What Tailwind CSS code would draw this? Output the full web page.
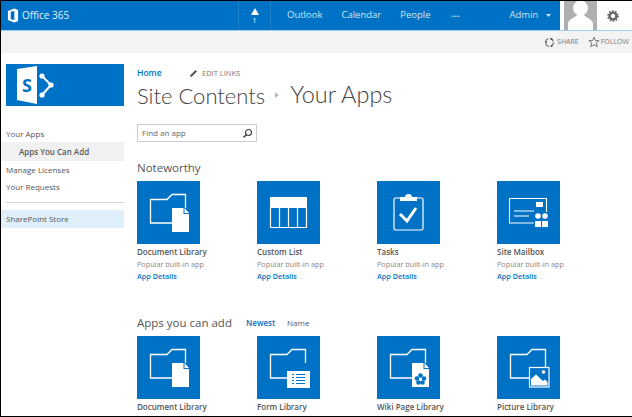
<!DOCTYPE html>
<html lang="en">
<head>
    <meta charset="UTF-8">
    <title>Your Apps</title>
    <script src="https://cdn.jsdelivr.net/npm/@tailwindcss/browser@4"></script>
</head>
<body class="bg-white">
    <svg width="0" height="0" class="absolute">
        <symbol id="folder" viewBox="0 0 63 63"><path d="M35 42H13.5V18.5H30L35 13.5H48.5V27" fill="none" stroke="#fff" stroke-width="1.3"/></symbol>
        <symbol id="doc" viewBox="0 0 63 63"><path d="M35 27H46.5V33H52V51H35Z" fill="#fff"/><path d="M47.5 27L52 32H47.5Z" fill="#fff"/></symbol>
    </svg>
    <div class="w-[632px] h-[417px] overflow-hidden border-t border-b border-l border-black font-['Open_Sans',sans-serif] flex flex-col">
        <!-- suite bar -->
        <div class="h-[29px] shrink-0 bg-[#0072c6] text-white flex items-center text-[9.5px]">
            <div class="w-[237px] flex items-center pl-[6px] gap-[3px]">
                <svg width="12" height="15" viewBox="0 0 13 16"><path d="M1 3L8 .5L12 2V14L8 15.5L1 13ZM8 3L4 4V12L8 13Z" fill="#fff"/></svg>
                <span class="text-[10px] text-[#e4f1fa]">Office 365</span>
            </div>
            <div class="w-[33px] h-full border-x border-[#1a82cf] flex flex-col items-center justify-center leading-none">
                <svg width="8" height="7" viewBox="0 0 8 7"><path d="M4 0L8 7H0Z" fill="#fff"/></svg>
                <span class="text-[7px] mt-[2px]">1</span>
            </div>
            <div class="flex items-center ml-[16px] gap-[19px] text-[#cfe6f6]">
                <span>Outlook</span>
                <span>Calendar</span>
                <span>People</span>
                <span class="font-bold ml-[2px] -mt-[2px] w-[10px]">...</span>
            </div>
            <div class="ml-[48px] flex items-center gap-[8px] text-[#cfe6f6]">
                <span>Admin</span>
                <svg width="5" height="3" viewBox="0 0 5 3"><path d="M0 0H5L2.5 3Z" fill="#cfe6f6"/></svg>
            </div>
            <div class="ml-[9px] flex-1 h-full bg-white flex items-center">
                <div class="ml-[4px] h-full w-[33px] bg-[#b0b0b0] flex items-end justify-center overflow-hidden">
                    <svg width="29" height="29" viewBox="0 0 29 29"><circle cx="14.5" cy="7" r="7.5" fill="#fff"/><path d="M2 29V23C2 18 9 17 11 14H18C20 17 27 18 27 23V29Z" fill="#fff"/></svg>
                </div>
                <svg class="ml-[10px]" width="12" height="12" viewBox="0 0 12 12"><circle cx="6" cy="6" r="3.4" fill="none" stroke="#666" stroke-width="2.4"/><circle cx="6" cy="6" r="5" fill="none" stroke="#666" stroke-width="1.6" stroke-dasharray="1.7 1.44"/></svg>
            </div>
        </div>
        <!-- ribbon row -->
        <div class="h-[23px] shrink-0 bg-[#f3f3f3] border-t border-[#9fd0ee] flex items-center justify-end gap-[9px] pr-[3px] text-[7px] text-[#777]">
            <div class="flex items-center gap-[2px]">
                <svg width="11" height="11" viewBox="0 0 11 11"><circle cx="5.5" cy="5.5" r="4" fill="none" stroke="#555" stroke-width="1.1" stroke-dasharray="4.5 1.8"/><circle cx="2" cy="5.5" r="1" fill="#555"/><circle cx="7.5" cy="2" r="1" fill="#555"/><circle cx="7.5" cy="9" r="1" fill="#555"/></svg>
                <span>SHARE</span>
            </div>
            <div class="flex items-center gap-[1px]">
                <svg width="12" height="12" viewBox="0 0 11 11"><path d="M5.5 1L6.8 4.2H10.2L7.5 6.4L8.5 9.9L5.5 7.9L2.5 9.9L3.5 6.4L.8 4.2H4.2Z" fill="none" stroke="#666" stroke-width=".8"/></svg>
                <span>FOLLOW</span>
            </div>
        </div>
        <div class="flex flex-1 min-h-0">
            <!-- left nav -->
            <div class="w-[123px] shrink-0 pt-[11px] text-[8px] text-[#555]">
                <div class="ml-[5px] h-[42px] bg-[#0072c6] flex items-center">
                    <svg width="50" height="42" viewBox="0 0 50 42">
                        <path d="M11 5L31 2V40L11 36Z" fill="#fff"/>
                        <path d="M36 12L45 21L36 31" fill="none" stroke="#fff" stroke-width="2"/>
                        <circle cx="36" cy="12" r="2.6" fill="#fff"/><circle cx="45" cy="21" r="2.6" fill="#fff"/><circle cx="36" cy="31" r="2.6" fill="#fff"/>
                        <text x="16" y="28" font-size="18" font-weight="700" fill="#0072c6" font-family="Open Sans">S</text>
                    </svg>
                </div>
                <div class="mt-[19px] h-[17px] pl-[5px] flex items-center">Your Apps</div>
                <div class="h-[19px] pl-[18px] flex items-center bg-[#f1f1f1] font-semibold">Apps You Can Add</div>
                <div class="h-[17px] pl-[5px] flex items-center">Manage Licenses</div>
                <div class="h-[18px] pl-[5px] flex items-center">Your Requests</div>
                <div class="ml-[5px] mt-[6px] border-t border-[#d5d5d5]"></div>
                <div class="mt-[7px] h-[18px] pl-[5px] flex items-center bg-[#e0f0fa]">SharePoint Store</div>
            </div>
            <!-- main column -->
            <div class="flex-1 pl-[13px] pt-[14px]">
                <div class="flex items-center h-[13px] text-[8.5px]">
                    <span class="w-[52px] font-semibold text-[#0072c6]">Home</span>
                    <svg width="9" height="9" viewBox="0 0 9 9"><path d="M1 8L1.5 6L6.5 1L8 2.5L3 7.5Z" fill="#555"/></svg>
                    <span class="ml-[4px] text-[7.5px] text-[#777]">EDIT LINKS</span>
                </div>
                <div class="flex items-center h-[30px] text-[#444] font-light font-['Lato',sans-serif]">
                    <span class="text-[22px]">Site Contents</span>
                    <svg class="ml-[10px] mr-[11px]" width="4" height="6" viewBox="0 0 4 6"><path d="M0 0L4 3L0 6Z" fill="#bbb"/></svg>
                    <span class="text-[23.5px]">Your Apps</span>
                </div>
                <div class="mt-[14px] w-[120px] h-[18px] border border-[#ccc] flex items-center justify-between pl-[4px] pr-[3px] text-[8px] text-[#666]">
                    <span>Find an app</span>
                    <svg width="11" height="11" viewBox="0 0 11 11"><circle cx="6.5" cy="4.5" r="3" fill="none" stroke="#444" stroke-width="1.2"/><path d="M4.5 6.5L1.5 9.5" stroke="#444" stroke-width="1.6"/></svg>
                </div>
                <h2 class="mt-[17px] h-[18px] text-[11.5px] leading-[18px] text-[#555]">Noteworthy</h2>
                <div class="mt-[4px] grid grid-cols-[120px_120px_120px_120px]">
                    <div>
                        <div class="w-[63px] h-[63px] bg-[#0072c6]"><svg width="63" height="63"><use href="#folder"/><use href="#doc"/></svg></div>
                        <p class="mt-[1px] h-[13px] leading-[13px] text-[8px] font-semibold text-[#555]">Document Library</p>
                        <p class="h-[12px] leading-[12px] text-[7.25px] text-[#888]">Popular built-in app</p>
                        <p class="h-[13px] leading-[13px] text-[7.25px] font-semibold text-[#0072c6]">App Details</p>
                    </div>
                    <div>
                        <div class="w-[63px] h-[63px] bg-[#0072c6]">
                            <svg width="63" height="63" viewBox="0 0 63 63"><rect x="13" y="16" width="37" height="11" fill="#fff"/><path d="M13.5 27V46.5H49.5V27M22.5 27V46.5M31.5 27V46.5M40.5 27V46.5" fill="none" stroke="#fff" stroke-width="1.2"/></svg>
                        </div>
                        <p class="mt-[1px] h-[13px] leading-[13px] text-[8px] font-semibold text-[#555]">Custom List</p>
                        <p class="h-[12px] leading-[12px] text-[7.25px] text-[#888]">Popular built-in app</p>
                        <p class="h-[13px] leading-[13px] text-[7.25px] font-semibold text-[#0072c6]">App Details</p>
                    </div>
                    <div>
                        <div class="w-[63px] h-[63px] bg-[#0072c6]">
                            <svg width="63" height="63" viewBox="0 0 63 63"><rect x="17" y="17" width="29" height="32" rx="1.5" fill="none" stroke="#fff" stroke-width="1.2"/><path d="M23 20V16H28C28 12 35 12 35 16H40V20Z" fill="#fff"/><path d="M23 33L30 40L39 27" fill="none" stroke="#fff" stroke-width="3"/></svg>
                        </div>
                        <p class="mt-[1px] h-[13px] leading-[13px] text-[8px] font-semibold text-[#555]">Tasks</p>
                        <p class="h-[12px] leading-[12px] text-[7.25px] text-[#888]">Popular built-in app</p>
                        <p class="h-[13px] leading-[13px] text-[7.25px] font-semibold text-[#0072c6]">App Details</p>
                    </div>
                    <div>
                        <div class="w-[63px] h-[63px] bg-[#0072c6]">
                            <svg width="63" height="63" viewBox="0 0 63 63"><path d="M37 42H12.5V17.5H49.5V31" fill="none" stroke="#fff" stroke-width="1.1"/><rect x="39" y="21" width="7" height="5" fill="#fff"/><path d="M17 30H37M17 35H32" stroke="#fff" stroke-width="1"/><circle cx="41" cy="35" r="2.8" fill="#fff"/><circle cx="48" cy="35" r="2.8" fill="#fff"/><path d="M38 46V40H44V46ZM45 46V40H51V46Z" fill="#fff"/></svg>
                        </div>
                        <p class="mt-[1px] h-[13px] leading-[13px] text-[8px] font-semibold text-[#555]">Site Mailbox</p>
                        <p class="h-[12px] leading-[12px] text-[7.25px] text-[#888]">Popular built-in app</p>
                        <p class="h-[13px] leading-[13px] text-[7.25px] font-semibold text-[#0072c6]">App Details</p>
                    </div>
                </div>
                <div class="mt-[30px] h-[20px] flex items-center">
                    <h2 class="w-[109px] text-[11.5px] text-[#555]">Apps you can add</h2>
                    <span class="w-[41px] text-[8px] font-semibold text-[#0072c6]">Newest</span>
                    <span class="text-[8px] text-[#555]">Name</span>
                </div>
                <div class="mt-[3px] grid grid-cols-[120px_120px_120px_120px]">
                    <div>
                        <div class="w-[63px] h-[63px] bg-[#0072c6]"><svg width="63" height="63"><use href="#folder"/><use href="#doc"/></svg></div>
                        <p class="mt-[1px] h-[13px] leading-[13px] text-[8px] font-semibold text-[#555]">Document Library</p>
                    </div>
                    <div>
                        <div class="w-[63px] h-[63px] bg-[#0072c6]">
                            <svg width="63" height="63" viewBox="0 0 63 63"><use href="#folder" width="63" height="63"/><rect x="30" y="35" width="23" height="17" fill="#fff"/><path d="M35 38.5H37M39 38.5H48M35 41.5H37M39 41.5H48M35 44.5H37M39 44.5H48M35 47.5H37M39 47.5H48" stroke="#0072c6" stroke-width="1.2"/></svg>
                        </div>
                        <p class="mt-[1px] h-[13px] leading-[13px] text-[8px] font-semibold text-[#555]">Form Library</p>
                    </div>
                    <div>
                        <div class="w-[63px] h-[63px] bg-[#0072c6]">
                            <svg width="63" height="63" viewBox="0 0 63 63"><use href="#folder" width="63" height="63"/><use href="#doc" width="63" height="63"/><g fill="#0072c6"><circle cx="43.5" cy="39.5" r="2.3"/><circle cx="47" cy="42.5" r="2.3"/><circle cx="45.5" cy="46.5" r="2.3"/><circle cx="41.5" cy="46.5" r="2.3"/><circle cx="40" cy="42.5" r="2.3"/></g><circle cx="43.5" cy="43.5" r="1.2" fill="#fff"/></svg>
                        </div>
                        <p class="mt-[1px] h-[13px] leading-[13px] text-[8px] font-semibold text-[#555]">Wiki Page Library</p>
                    </div>
                    <div>
                        <div class="w-[63px] h-[63px] bg-[#0072c6]">
                            <svg width="63" height="63" viewBox="0 0 63 63"><path d="M32 42H13.5V18.5H30L35 13.5H48.5V31" fill="none" stroke="#fff" stroke-width="1.3"/><rect x="32.5" y="31.5" width="19.5" height="19.5" fill="#0072c6" stroke="#fff" stroke-width="1.2"/><circle cx="46.5" cy="36" r="1.8" fill="#fff"/><path d="M34 49.5V43L39 38.5L46 45L48 43.5L50.5 46V49.5Z" fill="#fff"/></svg>
                        </div>
                        <p class="mt-[1px] h-[13px] leading-[13px] text-[8px] font-semibold text-[#555]">Picture Library</p>
                    </div>
                </div>
            </div>
        </div>
    </div>
</body>
</html>
